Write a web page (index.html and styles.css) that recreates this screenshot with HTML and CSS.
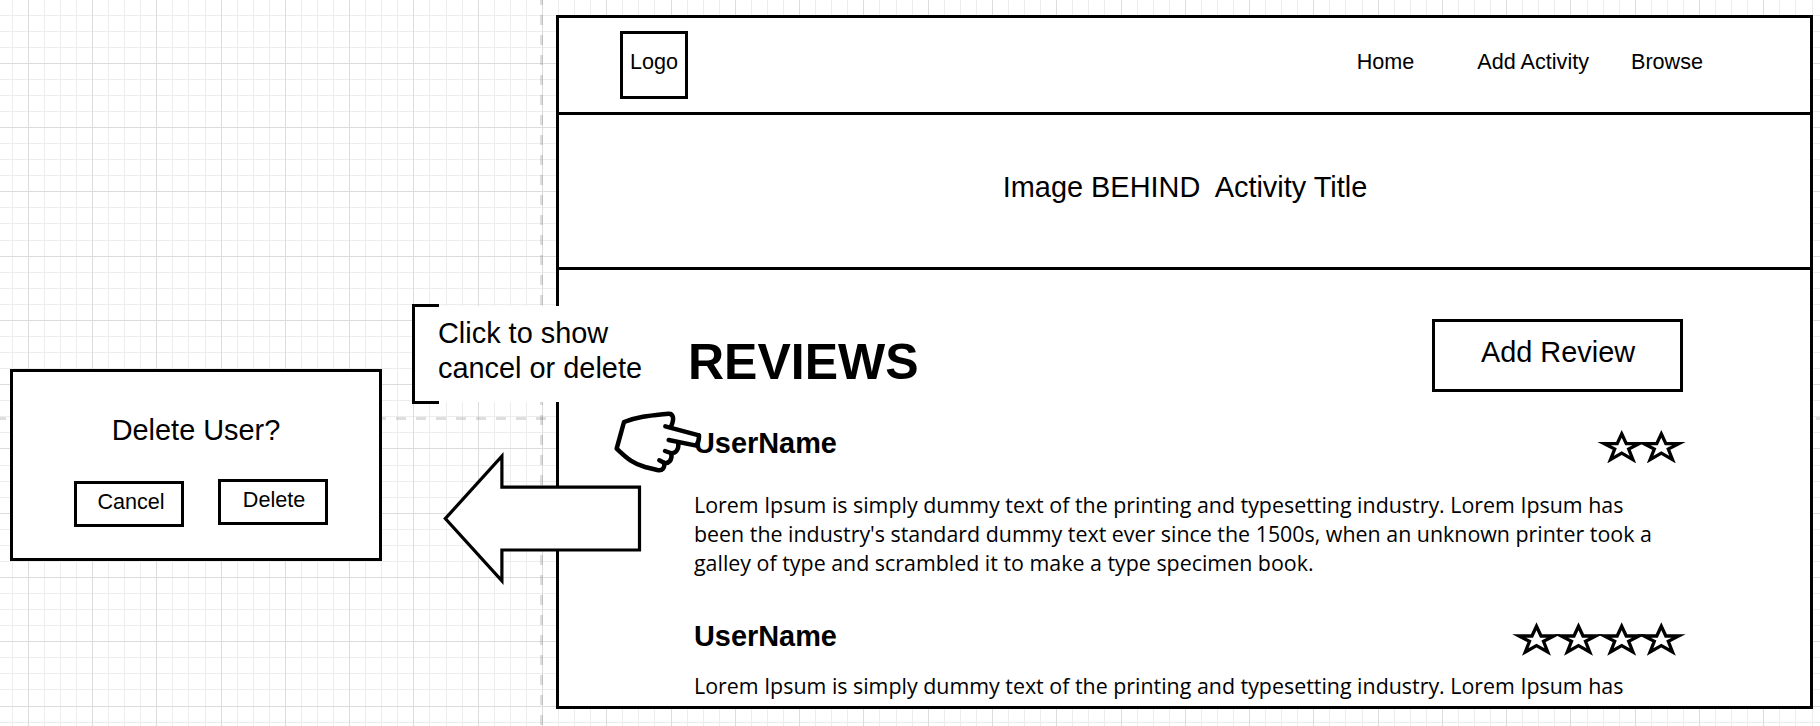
FILE: index.html
```html
<!DOCTYPE html>
<html lang="en">
<head>
<meta charset="utf-8">
<title>Activity reviews wireframe</title>
<link rel="stylesheet" href="styles.css">
</head>
<body>
<div class="canvas">
  <svg class="grid" width="1820" height="726" shape-rendering="crispEdges">
    <g class="minor">
      <path d="M-4.39 363H1830" stroke-width="740" stroke-dasharray="1 15.07"/>
      <path d="M910 -1.52V740" stroke-width="1840" stroke-dasharray="1 15.07"/>
    </g>
    <g class="major">
      <path d="M-36.53 363H1830" stroke-width="740" stroke-dasharray="1 63.28"/>
      <path d="M910 -1.52V740" stroke-width="1840" stroke-dasharray="1 63.28"/>
    </g>
    <g class="guides">
      <path d="M541.5 -5V740"/>
      <path d="M-4 418.5H1830"/>
    </g>
  </svg>

  <main class="page">
    <header class="topbar">
      <div class="logo">Logo</div>
      <nav class="nav"><span class="home">Home</span><span class="add">Add Activity</span><span>Browse</span></nav>
    </header>
    <section class="hero">Image BEHIND&nbsp; Activity Title</section>
    <section class="reviews">
      <div class="reviews-head">
        <h1>REVIEWS</h1>
        <div class="add-review">Add Review</div>
      </div>
      <article class="review">
        <div class="review-head">
          <h2>UserName</h2>
          <svg class="stars" width="100" height="40" viewBox="0 0 100 40">
            <defs><path id="star" d="M0 0L4.55 9.8H17.5L7 15.2L11.2 25.8L0 19.35L-11.2 25.8L-7 15.2L-17.5 9.8H-4.55Z"/></defs>
            <use href="#star" x="33.7" y="10.8"/><use href="#star" x="73.3" y="10.8"/>
          </svg>
        </div>
        <p>Lorem Ipsum is simply dummy text of the printing and typesetting industry. Lorem Ipsum has<br>been the industry's standard dummy text ever since the 1500s, when an unknown printer took a<br>galley of type and scrambled it to make a type specimen book.</p>
      </article>
      <article class="review second">
        <div class="review-head">
          <h2>UserName</h2>
          <svg class="stars" width="180" height="40" viewBox="-80 0 180 40">
            <use href="#star" x="-51.5" y="10.2"/><use href="#star" x="-9.5" y="10.2"/><use href="#star" x="33.7" y="10.2"/><use href="#star" x="73.3" y="10.2"/>
          </svg>
        </div>
        <p>Lorem Ipsum is simply dummy text of the printing and typesetting industry. Lorem Ipsum has</p>
      </article>
    </section>
  </main>

  <div class="callout">Click to show<br>cancel or delete</div>

  <svg class="arrow" width="210" height="150" viewBox="440 445 210 150">
    <path d="M445.3 518.6L501.9 456.2V487.2H639.5V550H501.9V580.8Z"/>
  </svg>

  <svg class="hand" width="110" height="80" viewBox="0 0 330 240">
    <path class="fill" d="M72 66L50 146Q95 195 172 210Q192 212 192 190Q214 188 214 162Q234 160 234 132L288 137L297 106L212 80Q225 40 205 40Z"/>
    <path d="M196 79L297 106Q298 122 289 137L206 120"/>
    <path d="M213 80C224 56 220 40 205 41C150 47 118 49 72 66L50 146C84 179 104 193 135 201L172 210C188 213 194 204 193 189"/>
    <path d="M178 181L192 188C207 192 217 180 214 161"/>
    <path d="M195 153L212 159C227 162 237 148 235 129"/>
  </svg>

  <div class="dialog">
    <div class="question">Delete User?</div>
    <div class="actions">
      <div class="button cancel">Cancel</div>
      <div class="button">Delete</div>
    </div>
  </div>
</div>
</body>
</html>
```
FILE: styles.css
```css
* { box-sizing: border-box; }

body { margin: 0; background: #fff; }

.canvas {
  position: relative;
  width: 1820px;
  height: 726px;
  overflow: hidden;
  background: #fff;
  color: #000;
  font-family: "Liberation Sans", Arial, sans-serif;
  font-size: 28.9px;
  white-space: nowrap;
}

.grid { position: absolute; left: 0; top: 0; fill: none; }
.minor { stroke: #ededed; }
.major { stroke: #dcdcdc; }
.guides { stroke: rgba(0, 0, 0, .13); stroke-width: 3; stroke-dasharray: 10; }

.page {
  position: absolute;
  left: 556px;
  top: 15px;
  width: 1257px;
  height: 694px;
  overflow: hidden;
  border: 3px solid #000;
  background: #fff;
}

.topbar {
  display: flex;
  justify-content: space-between;
  align-items: flex-start;
  height: 97px;
  padding: 13px 107px 0 61px;
  border-bottom: 3px solid #000;
  font-size: 21.6px;
  line-height: 24px;
}

.logo {
  width: 68px;
  height: 68px;
  padding-top: 16px;
  border: 3px solid #000;
  text-align: center;
}

.nav { display: flex; padding-top: 19px; }
.home { margin-right: 63px; }
.add { margin-right: 42px; }

.hero {
  display: flex;
  align-items: center;
  justify-content: center;
  height: 155px;
  padding: 0 0 8px 1px;
  border-bottom: 3px solid #000;
}

.reviews { padding: 49px 127px 0 135px; }

.reviews-head {
  display: flex;
  justify-content: space-between;
  height: 107px;
  margin-left: -6px;
}

h1 { margin: 13px 0 0; font-size: 50px; line-height: 60px; }

.add-review {
  display: flex;
  align-items: center;
  justify-content: center;
  width: 251px;
  height: 73px;
  padding: 0 0 6px 1px;
  border: 3px solid #000;
}

.review-head {
  display: flex;
  justify-content: space-between;
  height: 34px;
}

h2 { margin: 0; font-size: 28.9px; line-height: 34px; }

.stars {
  margin: -3px -5px 0 0;
  fill: #fff;
  stroke: #000;
  stroke-width: 3.3;
  stroke-miterlimit: 10;
}

.review p {
  margin: 30px 0 0;
  font-family: "Open Sans", sans-serif;
  font-size: 21.4px;
  line-height: 29px;
}

.second { margin-top: 42px; }
.second p { margin-top: 18px; }

.callout {
  position: absolute;
  left: 412px;
  top: 304px;
  width: 240px;
  height: 100px;
  padding: 12px 0 0 26px;
  background:
    linear-gradient(#000, #000) 0 0 / 3px 100% no-repeat,
    linear-gradient(#000, #000) 0 0 / 27px 3px no-repeat,
    linear-gradient(#000, #000) 0 100% / 27px 3px no-repeat,
    linear-gradient(#fff, #fff) 0 2px / 100% 96px no-repeat;
  line-height: 35px;
}

.arrow {
  position: absolute;
  left: 440px;
  top: 445px;
  fill: #fff;
  stroke: #000;
  stroke-width: 3.2;
  stroke-miterlimit: 10;
}

.hand {
  position: absolute;
  left: 600px;
  top: 400px;
  fill: none;
  stroke: #000;
  stroke-width: 13.5;
  stroke-linecap: round;
  stroke-linejoin: round;
}
.hand .fill { fill: #fff; stroke: none; }

.dialog {
  position: absolute;
  left: 10px;
  top: 369px;
  width: 372px;
  height: 192px;
  padding: 41px 51px 0 61px;
  border: 3px solid #000;
  background: #fff;
}

.question { padding-right: 10px; line-height: 34px; text-align: center; }

.actions {
  display: flex;
  justify-content: space-between;
  margin-top: 32px;
}

.button {
  width: 110px;
  height: 46px;
  padding: 6px 0 0 2px;
  border: 3px solid #000;
  font-size: 21.6px;
  line-height: 24px;
  text-align: center;
}
.cancel { margin-top: 2px; padding-left: 4px; }
```
